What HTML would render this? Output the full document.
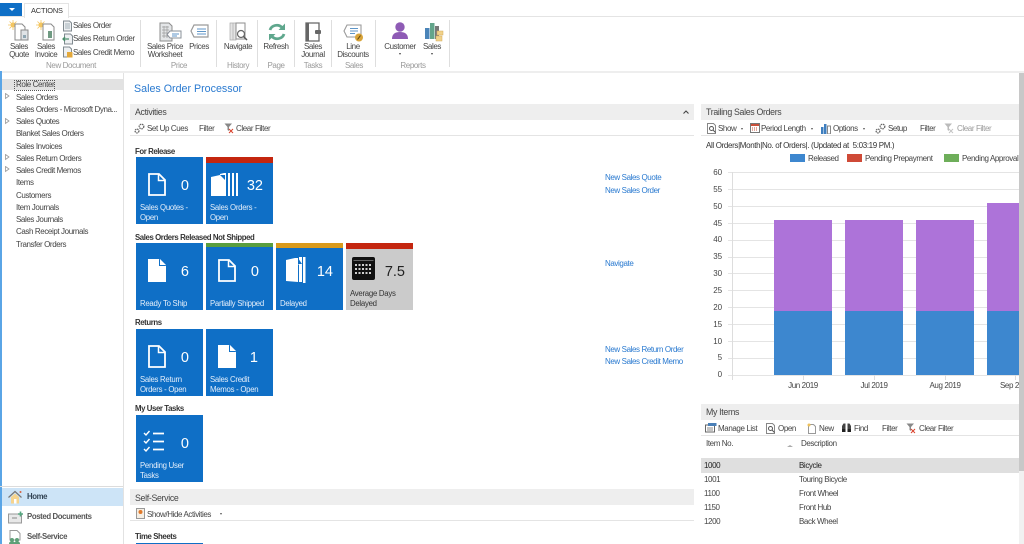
<!DOCTYPE html>
<html><head><meta charset="utf-8"><style>
html,body{margin:0;padding:0;width:1024px;height:544px;overflow:hidden;background:#fff}
body{position:relative;font-family:"Liberation Sans",sans-serif;font-size:8px;letter-spacing:-.4px;color:#444}
.a,.t,svg{position:absolute}
.t{white-space:nowrap;line-height:10px}
.c{text-align:center;transform:translateX(-50%)}
.g{color:#9a9a9a}
.b{font-weight:bold;color:#333;font-size:7.8px}
.l{color:#2a7ad0}
.h{font-size:8.8px;letter-spacing:-.33px;color:#444}
.nv{font-weight:bold;font-size:7.8px;letter-spacing:-.38px}
.hd{position:absolute;background:#eeeeee;height:16px}
.tile{position:absolute;width:67px;height:67px;background:#0f6fc6;color:#fff}
.tile .n{position:absolute;top:21px;right:14px;font-size:14.5px;letter-spacing:0;line-height:16px;color:#fff;text-align:right}
.tile .x{position:absolute;left:4px;bottom:2px;font-size:7.8px;letter-spacing:-.27px;line-height:9.4px;color:#e4eefa;white-space:nowrap}
.bar{position:absolute;left:0;top:0;width:100%;height:6px}
.sep{position:absolute;top:20px;height:47px;width:1px;background:#dedede}
.hl{position:absolute;left:728px;width:291px;height:1px;background:#e4e4e4}
.r{text-align:right;letter-spacing:-.1px;font-size:8px}
.k{position:absolute;top:375px;width:1px;height:5px;background:#dddddd}
</style></head><body>

<!-- top tab bar -->
<div class="a" style="left:0;top:3px;width:22px;height:13px;background:#0f6fc6"></div>
<div class="a" style="left:9px;top:8px;border-left:3px solid transparent;border-right:3px solid transparent;border-top:3px solid #fff"></div>
<div class="a" style="left:24px;top:3px;width:43px;height:14px;border:1px solid #e4e4e4;border-bottom:0;background:#fff"></div>
<div class="t" style="left:31px;top:6px;font-size:7.4px;letter-spacing:-.15px;color:#333">ACTIONS</div>
<div class="a" style="left:0;top:16px;width:24px;height:1px;background:#e4e4e4"></div>
<div class="a" style="left:68px;top:16px;width:956px;height:1px;background:#e4e4e4"></div>

<!-- ribbon icons -->
<svg style="left:8px;top:20px" width="22" height="22" viewBox="0 0 22 22"><circle cx="5" cy="5" r="2.5" fill="#f3c560"/><path d="M5 0v10M0 5h10M1.500 1.500l7 7M8.500 1.500l-7 7" stroke="#f3c560" stroke-width=".8"/><path d="M7 4h7l3 3v13H7z" fill="#fff" stroke="#8a8a8a"/><path d="M13 10h7v10h-7z" fill="#dfe3e6" stroke="#8a8a8a"/><path d="M15 15h3v3h-3z" fill="#8fa6b2"/></svg>
<svg style="left:36px;top:20px" width="22" height="22" viewBox="0 0 22 22"><circle cx="5" cy="5" r="2.500" fill="#f3c560"/><path d="M5 0v10M0 5h10M1.500 1.500l7 7M8.500 1.500l-7 7" stroke="#f3c560" stroke-width=".8"/><path d="M7 4h8l3 3v13H7z" fill="#fff" stroke="#8a8a8a"/><path d="M12 11h4v7h-4z" fill="#6f9a82"/></svg>
<svg style="left:62px;top:20px" width="11" height="12" viewBox="0 0 11 12"><path d="M1.500 1h6l2 2v8h-8z" fill="#eef0f2" stroke="#808a90"/><path d="M3 4h5M3 6h5M3 8h5" stroke="#8a9aa5" stroke-width=".8"/></svg>
<svg style="left:62px;top:33px" width="11" height="12" viewBox="0 0 11 12"><path d="M2.500 1h6l2 2v8h-8z" fill="#eef0f2" stroke="#808a90"/><path d="M7 6H1M3 4L1 6l2 2" stroke="#4c8f6c" stroke-width="1.300" fill="none"/></svg>
<svg style="left:62px;top:46px" width="11" height="12" viewBox="0 0 11 12"><path d="M1.500 1h6l2 2v8h-8z" fill="#eef0f2" stroke="#808a90"/><rect x="5" y="6" width="5.500" height="5.500" fill="#e3a93c"/></svg>
<svg style="left:159px;top:22px" width="24" height="21" viewBox="0 0 24 21"><path d="M1 1h9l3 3v15H1z" fill="#e4e6e8" stroke="#8d8d8d"/><path d="M3 5h7M3 8h7M3 11h7M3 14h7M5 4v12M8 4v12" stroke="#9a9a9a" stroke-width=".7"/><path d="M11 9h11v7H11l-3-3.500z" fill="#fff" stroke="#8a9098"/><path d="M13 12h7M13 14h5" stroke="#5f96c8"/></svg>
<svg style="left:190px;top:23px" width="20" height="16" viewBox="0 0 20 16"><path d="M4 2h14v12H4L1 8z" fill="#fff" stroke="#9a9a9a" stroke-width="1.200"/><path d="M7 6h9M7 8.500h9M7 11h9" stroke="#5f96c8"/></svg>
<svg style="left:229px;top:22px" width="20" height="21" viewBox="0 0 20 21"><path d="M1 1h3v17H1zM4 1h3v17H4z" fill="#e4e4e4" stroke="#aaa" stroke-width=".7"/><path d="M7 1h9v16H7z" fill="#fff" stroke="#8d8d8d"/><circle cx="12" cy="12" r="3.500" fill="#fff" stroke="#666" stroke-width="1.200"/><path d="M14.500 14.500L18 18" stroke="#555" stroke-width="1.500"/></svg>
<svg style="left:267px;top:22px" width="20" height="20" viewBox="0 0 20 20"><path d="M3 8a7 6.500 0 0 1 12-2.500" fill="none" stroke="#5fa78d" stroke-width="2.800"/><path d="M18 1.500v6.500h-6.500z" fill="#5fa78d"/><path d="M17 12a7 6.500 0 0 1-12 2.500" fill="none" stroke="#5fa78d" stroke-width="2.800"/><path d="M2 18.500V12h6.500z" fill="#5fa78d"/></svg>
<svg style="left:305px;top:22px" width="16" height="20" viewBox="0 0 16 20"><path d="M1 1h13v18H1z" fill="#fff" stroke="#666" stroke-width="1.300"/><rect x="1" y="1" width="3" height="18" fill="#666"/><rect x="10" y="8" width="6" height="4" rx="1" fill="#666"/></svg>
<svg style="left:343px;top:24px" width="22" height="20" viewBox="0 0 22 20"><path d="M4 1h14v12H4L1 7z" fill="#fff" stroke="#9a9a9a" stroke-width="1.100"/><path d="M7 4.500h8M7 7h8M7 9.500h5" stroke="#5f96c8"/><circle cx="16" cy="13.500" r="4" fill="#d8a43a"/><path d="M14.500 15.500l3-4" stroke="#5a4210"/></svg>
<svg style="left:391px;top:21px" width="18" height="19" viewBox="0 0 18 19"><circle cx="9" cy="6" r="4.700" fill="#8e5bb5"/><path d="M1 18c0-5 3-7 8-7s8 2 8 7z" fill="#8e5bb5"/></svg>
<svg style="left:424px;top:21px" width="20" height="21" viewBox="0 0 20 21"><rect x="1" y="7" width="4.500" height="11" fill="#4a84b8"/><rect x="6" y="2" width="4.500" height="16" fill="#63a58b"/><rect x="11" y="5" width="4" height="13" fill="#777"/><rect x="13" y="10" width="6" height="4" fill="#f1d28a" stroke="#d2a95a" stroke-width=".5"/><rect x="12" y="15" width="6" height="5" fill="#f1d28a" stroke="#d2a95a" stroke-width=".5"/></svg>

<!-- ribbon labels -->
<div class="t c" style="left:19px;top:42px">Sales</div><div class="t c" style="left:19px;top:50px">Quote</div>
<div class="t c" style="left:46px;top:42px">Sales</div><div class="t c" style="left:46px;top:50px">Invoice</div>
<div class="t" style="left:73px;top:21px">Sales Order</div>
<div class="t" style="left:73px;top:34px">Sales Return Order</div>
<div class="t" style="left:73px;top:48px">Sales Credit Memo</div>
<div class="t c g" style="left:71px;top:61px">New Document</div>
<div class="t c" style="left:165px;top:42px">Sales Price</div><div class="t c" style="left:165px;top:50px">Worksheet</div>
<div class="t c" style="left:199px;top:42px">Prices</div>
<div class="t c g" style="left:179px;top:61px">Price</div>
<div class="t c" style="left:238px;top:42px">Navigate</div>
<div class="t c g" style="left:238px;top:61px">History</div>
<div class="t c" style="left:276px;top:42px">Refresh</div>
<div class="t c g" style="left:276px;top:61px">Page</div>
<div class="t c" style="left:313px;top:42px">Sales</div><div class="t c" style="left:313px;top:50px">Journal</div>
<div class="t c g" style="left:313px;top:61px">Tasks</div>
<div class="t c" style="left:353px;top:42px">Line</div><div class="t c" style="left:353px;top:50px">Discounts</div>
<div class="t c g" style="left:354px;top:61px">Sales</div>
<div class="t c" style="left:400px;top:42px">Customer</div>
<div class="t c" style="left:432px;top:42px">Sales</div>
<div class="a" style="left:399px;top:53px;border-left:1.500px solid transparent;border-right:1.500px solid transparent;border-top:2px solid #444"></div>
<div class="a" style="left:431px;top:53px;border-left:1.500px solid transparent;border-right:1.500px solid transparent;border-top:2px solid #444"></div>
<div class="t c g" style="left:413px;top:61px">Reports</div>
<div class="sep" style="left:140px"></div><div class="sep" style="left:216px"></div><div class="sep" style="left:257px"></div><div class="sep" style="left:294px"></div><div class="sep" style="left:331px"></div><div class="sep" style="left:375px"></div><div class="sep" style="left:449px"></div>
<div class="a" style="left:0;top:71px;width:1024px;height:2px;background:#eeeeee"></div>

<!-- nav pane -->
<div class="a" style="left:0;top:71px;width:1.500px;height:473px;background:#5aa5e6"></div>
<div class="a" style="left:123px;top:73px;width:1px;height:471px;background:#e2e2e2"></div>
<div class="a" style="left:2px;top:79px;width:121px;height:11px;background:#e2e2e2"></div>
<div class="a" style="left:14px;top:79.500px;width:39px;height:9px;border:1px dotted #555"></div>
<div class="t" style="left:16px;top:80px">Role Center</div>
<div class="t" style="left:16px;top:93px">Sales Orders</div>
<div class="t" style="left:16px;top:105px">Sales Orders - Microsoft Dyna...</div>
<div class="t" style="left:16px;top:117px">Sales Quotes</div>
<div class="t" style="left:16px;top:129px">Blanket Sales Orders</div>
<div class="t" style="left:16px;top:142px">Sales Invoices</div>
<div class="t" style="left:16px;top:154px">Sales Return Orders</div>
<div class="t" style="left:16px;top:166px">Sales Credit Memos</div>
<div class="t" style="left:16px;top:178px">Items</div>
<div class="t" style="left:16px;top:191px">Customers</div>
<div class="t" style="left:16px;top:203px">Item Journals</div>
<div class="t" style="left:16px;top:215px">Sales Journals</div>
<div class="t" style="left:16px;top:227px">Cash Receipt Journals</div>
<div class="t" style="left:16px;top:240px">Transfer Orders</div>
<svg style="left:5px;top:93px" width="5" height="7"><path d="M.5.500l3.500 2.500-3.500 2.500z" fill="none" stroke="#999" stroke-width=".8"/></svg>
<svg style="left:5px;top:118px" width="5" height="7"><path d="M.5.500l3.500 2.500-3.500 2.500z" fill="none" stroke="#999" stroke-width=".8"/></svg>
<svg style="left:5px;top:154px" width="5" height="7"><path d="M.5.500l3.500 2.500-3.500 2.500z" fill="none" stroke="#999" stroke-width=".8"/></svg>
<svg style="left:5px;top:166px" width="5" height="7"><path d="M.5.500l3.500 2.500-3.500 2.500z" fill="none" stroke="#999" stroke-width=".8"/></svg>

<div class="a" style="left:0;top:486px;width:123px;height:1px;background:#dcdcdc"></div>
<div class="a" style="left:2px;top:488px;width:121px;height:18px;background:#cde4f7"></div>
<svg style="left:8px;top:490px" width="15" height="14" viewBox="0 0 15 14"><path d="M.5 7.500L7 1.500l6.500 6" fill="none" stroke="#777" stroke-width="1.200"/><path d="M3 7l4-3.500L11 7v6.500H3z" fill="#f6d48e"/><rect x="6" y="9" width="2.500" height="4.500" fill="#fff"/><circle cx="12.500" cy="2" r="1" fill="#d9603c"/></svg>
<svg style="left:8px;top:511px" width="16" height="13" viewBox="0 0 16 13"><rect x=".5" y="3" width="13" height="9" fill="#e8e8e8" stroke="#999"/><path d="M4 7h5" stroke="#888"/><path d="M10 3h5M12.500 .5v5" stroke="#55a57f" stroke-width="1.600"/></svg>
<svg style="left:8px;top:530px" width="15" height="14" viewBox="0 0 15 14"><path d="M2 .5h7l3 3V10H2z" fill="#fff" stroke="#999"/><circle cx="4" cy="10" r="2" fill="#5fa078"/><circle cx="9" cy="10" r="2" fill="#5fa078"/><path d="M1 14c0-2 1-2.500 3-2.500S7 12 7 14zM6 14c0-2 1-2.500 3-2.500s3 .5 3 2.500z" fill="#5fa078"/></svg>
<div class="t nv" style="left:27px;top:492px;color:#345">Home</div>
<div class="t nv" style="left:27px;top:512px;color:#555">Posted Documents</div>
<div class="t nv" style="left:27px;top:532px;color:#555">Self-Service</div>

<!-- main -->
<div class="t" style="left:134px;top:82px;font-size:10.7px;letter-spacing:0;line-height:14px;color:#2a7ad0">Sales Order Processor</div>
<div class="hd" style="left:130px;top:104px;width:564px"></div>
<div class="t h" style="left:135px;top:107px">Activities</div>
<svg style="left:683px;top:110px" width="6" height="4"><path d="M.5 3.500L3 1l2.500 2.500" fill="none" stroke="#444" stroke-width="1.100"/></svg>
<svg style="left:134px;top:123px" width="11" height="11" viewBox="0 0 11 11"><circle cx="7.500" cy="3.500" r="2.300" fill="none" stroke="#666" stroke-width="1.300" stroke-dasharray="1.500 .7"/><circle cx="3" cy="8" r="1.900" fill="none" stroke="#666" stroke-width="1.300" stroke-dasharray="1.500 .7"/></svg>
<div class="t" style="left:147px;top:124px">Set Up Cues</div>
<div class="t" style="left:199px;top:124px">Filter</div>
<svg style="left:224px;top:123px" width="11" height="11" viewBox="0 0 11 11"><path d="M.5.500h7.500L5 4v4L3.500 7V4z" fill="#888"/><path d="M5 6l4 4M9 6l-4 4" stroke="#d9412b" stroke-width="1"/></svg>
<div class="t" style="left:236px;top:124px">Clear Filter</div>
<div class="a" style="left:130px;top:135px;width:564px;height:1px;background:#e4e4e4"></div>

<div class="t b" style="left:135px;top:147px">For Release</div>
<div class="tile" style="left:136px;top:157px">
 <svg style="left:12px;top:16px" width="18" height="23" viewBox="0 0 18 23"><path d="M1 1h10l6 6v15H1z" fill="none" stroke="#fff" stroke-width="1.800"/><path d="M10.500 1v6.500H17" fill="none" stroke="#fff" stroke-width="1.500"/></svg>
 <div class="n">0</div><div class="x">Sales Quotes -<br>Open</div></div>
<div class="tile" style="left:206px;top:157px"><div class="bar" style="background:#c4260f"></div>
 <svg style="left:4px;top:15px" width="28" height="25" viewBox="0 0 28 25"><path d="M1 5l9-2v-1l4-1 2 0v23H1z" fill="#fff"/><path d="M10 3l5 5V3z" fill="#0f6fc6"/><path d="M18 1h2v23h-2zM22 1h2v23h-2zM26 1h2v23h-2z" fill="#fff"/></svg>
 <div class="n" style="right:10px">32</div><div class="x">Sales Orders -<br>Open</div></div>

<div class="t b" style="left:135px;top:233px">Sales Orders Released Not Shipped</div>
<div class="tile" style="left:136px;top:243px">
 <svg style="left:12px;top:16px" width="18" height="23" viewBox="0 0 18 23"><path d="M0 0h11l7 7v16H0z" fill="#fff"/><path d="M11 0v7h7z" fill="#0f6fc6"/><path d="M12 0l6 6h-6z" fill="#fff"/></svg>
 <div class="n">6</div><div class="x">Ready To Ship</div></div>
<div class="tile" style="left:206px;top:243px"><div class="bar" style="height:4px;background:#5a9e3e"></div>
 <svg style="left:12px;top:16px" width="18" height="23" viewBox="0 0 18 23"><path d="M1 1h10l6 6v15H1z" fill="none" stroke="#fff" stroke-width="1.800"/><path d="M10.500 1v6.500H17" fill="none" stroke="#fff" stroke-width="1.500"/></svg>
 <div class="n">0</div><div class="x">Partially Shipped</div></div>
<div class="tile" style="left:276px;top:243px"><div class="bar" style="height:5px;background:#d99a1c"></div>
 <svg style="left:10px;top:14px" width="20" height="26" viewBox="0 0 20 26"><path d="M0 3l9-2 3 0v24l-12-1z" fill="#fff"/><path d="M10 1l5 6-5 1z" fill="#fff"/><path d="M17 0h2.500v26H17z" fill="#fff"/><path d="M13 0h3v25h-3z" fill="#fff"/><path d="M12 1l4 6h-4z" fill="#0f6fc6"/></svg>
 <div class="n" style="right:10px">14</div><div class="x">Delayed</div></div>
<div class="tile" style="left:346px;top:243px;background:#cbcbcb;color:#333"><div class="bar" style="background:#c4260f"></div>
 <svg style="left:6px;top:14px" width="23" height="23" viewBox="0 0 23 23"><rect x="0" y="0" width="23" height="23" rx="2" fill="#111"/><rect x="1.500" y="3" width="20" height="1" fill="#666"/><g fill="#cfcfcf"><rect x="3" y="7" width="2" height="2"/><rect x="6.500" y="7" width="2" height="2"/><rect x="10" y="7" width="2" height="2"/><rect x="13.500" y="7" width="2" height="2"/><rect x="17" y="7" width="2" height="2"/><rect x="3" y="11" width="2" height="2"/><rect x="6.500" y="11" width="2" height="2"/><rect x="10" y="11" width="2" height="2"/><rect x="13.500" y="11" width="2" height="2"/><rect x="17" y="11" width="2" height="2"/><rect x="3" y="15" width="2" height="2"/><rect x="6.500" y="15" width="2" height="2"/><rect x="10" y="15" width="2" height="2"/><rect x="13.500" y="15" width="2" height="2"/><rect x="17" y="15" width="2" height="2"/></g></svg>
 <div class="n" style="right:8px;color:#222">7.5</div><div class="x" style="color:#333">Average Days<br>Delayed</div></div>

<div class="t b" style="left:135px;top:318px">Returns</div>
<div class="tile" style="left:136px;top:329px">
 <svg style="left:12px;top:16px" width="18" height="23" viewBox="0 0 18 23"><path d="M1 1h10l6 6v15H1z" fill="none" stroke="#fff" stroke-width="1.800"/><path d="M10.500 1v6.500H17" fill="none" stroke="#fff" stroke-width="1.500"/></svg>
 <div class="n">0</div><div class="x">Sales Return<br>Orders - Open</div></div>
<div class="tile" style="left:206px;top:329px">
 <svg style="left:12px;top:16px" width="18" height="23" viewBox="0 0 18 23"><path d="M0 0h11l7 7v16H0z" fill="#fff"/><path d="M11 0v7h7z" fill="#0f6fc6"/><path d="M12 0l6 6h-6z" fill="#fff"/></svg>
 <div class="n" style="right:15px">1</div><div class="x">Sales Credit<br>Memos - Open</div></div>

<div class="t b" style="left:135px;top:404px">My User Tasks</div>
<div class="tile" style="left:136px;top:415px">
 <svg style="left:7px;top:15px" width="22" height="22" viewBox="0 0 22 22"><path d="M1 3l2 2 3.500-4M1 11l2 2 3.500-4M1 19l2 2 3.500-4" fill="none" stroke="#fff" stroke-width="1.400"/><path d="M10 3.500h11M10 11.500h11M10 19.500h11" stroke="#fff" stroke-width="1.800"/></svg>
 <div class="n">0</div><div class="x">Pending User<br>Tasks</div></div>

<div class="t l" style="left:605px;top:173px">New Sales Quote</div>
<div class="t l" style="left:605px;top:186px">New Sales Order</div>
<div class="t l" style="left:605px;top:259px">Navigate</div>
<div class="t l" style="left:605px;top:345px">New Sales Return Order</div>
<div class="t l" style="left:605px;top:357px">New Sales Credit Memo</div>

<div class="hd" style="left:130px;top:489px;width:564px"></div>
<div class="t h" style="left:135px;top:493px">Self-Service</div>
<svg style="left:136px;top:508px" width="10" height="11" viewBox="0 0 10 11"><rect x=".5" y=".5" width="8" height="10" fill="#f6efe4" stroke="#999"/><circle cx="4.500" cy="4" r="2" fill="#e0792b"/></svg>
<div class="t" style="left:147px;top:510px">Show/Hide Activities</div>
<div class="a" style="left:220px;top:513px;border-left:1.500px solid transparent;border-right:1.500px solid transparent;border-top:2px solid #555"></div>
<div class="a" style="left:130px;top:520px;width:564px;height:1px;background:#e4e4e4"></div>
<div class="t b" style="left:135px;top:532px">Time Sheets</div>
<div class="a" style="left:136px;top:543px;width:67px;height:1px;background:#0f6fc6"></div>

<!-- right column: chart -->
<div class="hd" style="left:701px;top:104px;width:318px"></div>
<div class="t h" style="left:706px;top:107px">Trailing Sales Orders</div>
<svg style="left:707px;top:123px" width="10" height="11" viewBox="0 0 10 11"><path d="M.5.500h6l2 2v8h-8z" fill="#fff" stroke="#888"/><circle cx="4.500" cy="5.500" r="2" fill="none" stroke="#555"/><path d="M6 7l2.500 2.500" stroke="#555"/></svg>
<div class="t" style="left:718px;top:124px">Show</div>
<div class="a" style="left:741px;top:127.500px;border-left:1.500px solid transparent;border-right:1.500px solid transparent;border-top:2px solid #555"></div>
<svg style="left:750px;top:123px" width="10" height="10" viewBox="0 0 10 10"><rect x=".5" y=".5" width="9" height="9" fill="#fff" stroke="#777"/><rect x="1" y="1" width="8" height="2" fill="#c9503a"/><path d="M2 5h6M2 7h6" stroke="#c9503a" stroke-dasharray="1 1"/></svg>
<div class="t" style="left:761px;top:124px">Period Length</div>
<div class="a" style="left:811px;top:127.500px;border-left:1.500px solid transparent;border-right:1.500px solid transparent;border-top:2px solid #555"></div>
<svg style="left:821px;top:123px" width="10" height="11" viewBox="0 0 10 11"><rect x="0" y="4" width="2.500" height="7" fill="#3f7fbf"/><rect x="3" y="1" width="2.500" height="10" fill="#3f7fbf"/><path d="M6.500 3h3v8h-3z" fill="#fff" stroke="#888"/></svg>
<div class="t" style="left:833px;top:124px">Options</div>
<div class="a" style="left:863px;top:127.500px;border-left:1.500px solid transparent;border-right:1.500px solid transparent;border-top:2px solid #555"></div>
<svg style="left:875px;top:123px" width="11" height="11" viewBox="0 0 11 11"><circle cx="7.500" cy="3.500" r="2.300" fill="none" stroke="#666" stroke-width="1.300" stroke-dasharray="1.500 .7"/><circle cx="3" cy="8" r="1.900" fill="none" stroke="#666" stroke-width="1.300" stroke-dasharray="1.500 .7"/></svg>
<div class="t" style="left:888px;top:124px">Setup</div>
<div class="t" style="left:920px;top:124px">Filter</div>
<svg style="left:944px;top:123px" width="11" height="11" viewBox="0 0 11 11"><path d="M.5.500h7.500L5 4v4L3.500 7V4z" fill="#bbb"/><path d="M5 6l4 4M9 6l-4 4" stroke="#c4c4c4"/></svg>
<div class="t g" style="left:957px;top:124px">Clear Filter</div>
<div class="a" style="left:701px;top:135px;width:318px;height:1px;background:#e4e4e4"></div>
<div class="t" style="left:706px;top:141px;letter-spacing:-.35px;color:#333">All Orders|Month|No. of Orders|. (Updated at&nbsp; 5:03:19 PM.)</div>

<div class="a" style="left:790px;top:154px;width:15px;height:8px;background:#3d87cf"></div>
<div class="t" style="left:808px;top:154px">Released</div>
<div class="a" style="left:847px;top:154px;width:15px;height:8px;background:#cf4a37"></div>
<div class="t" style="left:865px;top:154px">Pending Prepayment</div>
<div class="a" style="left:944px;top:154px;width:15px;height:8px;background:#6eae5a"></div>
<div class="t" style="left:962px;top:154px;width:57px;overflow:hidden">Pending Approval</div>

<!-- gridlines -->
<div class="hl" style="top:172px"></div><div class="hl" style="top:189px"></div><div class="hl" style="top:206px"></div><div class="hl" style="top:223px"></div><div class="hl" style="top:240px"></div><div class="hl" style="top:257px"></div><div class="hl" style="top:273px"></div><div class="hl" style="top:290px"></div><div class="hl" style="top:307px"></div><div class="hl" style="top:324px"></div><div class="hl" style="top:341px"></div><div class="hl" style="top:358px"></div><div class="hl" style="top:375px"></div>
<div class="a" style="left:732px;top:172px;width:1px;height:208px;background:#dddddd"></div>
<div class="k" style="left:803px"></div><div class="k" style="left:874px"></div><div class="k" style="left:945px"></div><div class="k" style="left:1015px"></div>

<div class="t r" style="left:704px;width:18px;top:168px">60</div><div class="t r" style="left:704px;width:18px;top:185px">55</div><div class="t r" style="left:704px;width:18px;top:202px">50</div><div class="t r" style="left:704px;width:18px;top:219px">45</div><div class="t r" style="left:704px;width:18px;top:235px">40</div><div class="t r" style="left:704px;width:18px;top:252px">35</div><div class="t r" style="left:704px;width:18px;top:269px">30</div><div class="t r" style="left:704px;width:18px;top:286px">25</div><div class="t r" style="left:704px;width:18px;top:303px">20</div><div class="t r" style="left:704px;width:18px;top:320px">15</div><div class="t r" style="left:704px;width:18px;top:337px">10</div><div class="t r" style="left:704px;width:18px;top:353px">5</div><div class="t r" style="left:704px;width:18px;top:370px">0</div>

<!-- bars -->
<div class="a" style="left:774px;top:220px;width:58px;height:91px;background:#ad73d9"></div><div class="a" style="left:774px;top:311px;width:58px;height:64px;background:#3d87cf"></div>
<div class="a" style="left:845px;top:220px;width:58px;height:91px;background:#ad73d9"></div><div class="a" style="left:845px;top:311px;width:58px;height:64px;background:#3d87cf"></div>
<div class="a" style="left:916px;top:220px;width:58px;height:91px;background:#ad73d9"></div><div class="a" style="left:916px;top:311px;width:58px;height:64px;background:#3d87cf"></div>
<div class="a" style="left:987px;top:203px;width:32px;height:108px;background:#ad73d9"></div><div class="a" style="left:987px;top:311px;width:32px;height:64px;background:#3d87cf"></div>

<div class="t c" style="left:803px;top:381px">Jun 2019</div>
<div class="t c" style="left:874px;top:381px">Jul 2019</div>
<div class="t c" style="left:945px;top:381px">Aug 2019</div>
<div class="t" style="left:1000px;top:381px;width:19px;overflow:hidden">Sep 2019</div>

<!-- my items -->
<div class="hd" style="left:701px;top:404px;width:318px"></div>
<div class="t h" style="left:706px;top:407px">My Items</div>
<svg style="left:705px;top:422px" width="12" height="11" viewBox="0 0 12 11"><rect x=".5" y="3" width="9" height="7" fill="#fff" stroke="#666"/><rect x="3" y="1" width="8.500" height="3" fill="#4a80b8"/><path d="M2 6h6M2 8h6" stroke="#888"/></svg>
<div class="t" style="left:718px;top:424px">Manage List</div>
<svg style="left:766px;top:423px" width="10" height="11" viewBox="0 0 10 11"><path d="M.5.500h6l2 2v8h-8z" fill="#fff" stroke="#888"/><circle cx="4.500" cy="5.500" r="2" fill="none" stroke="#555"/><path d="M6 7l2.500 2.500" stroke="#555"/></svg>
<div class="t" style="left:778px;top:424px">Open</div>
<svg style="left:807px;top:423px" width="10" height="11" viewBox="0 0 10 11"><path d="M1.500 1.500h5l2 2v7h-7z" fill="#fff" stroke="#999"/><circle cx="2" cy="2" r="1.500" fill="#efc15a"/></svg>
<div class="t" style="left:819px;top:424px">New</div>
<svg style="left:841px;top:423px" width="11" height="10" viewBox="0 0 11 10"><path d="M1 9V3l1.500-2.500h2V9zM6.500 9V.5h2L10 3v6z" fill="#444"/><rect x="1" y="6" width="3.500" height="3" fill="#222"/><rect x="6.500" y="6" width="3.500" height="3" fill="#222"/></svg>
<div class="t" style="left:854px;top:424px">Find</div>
<div class="t" style="left:882px;top:424px">Filter</div>
<svg style="left:906px;top:423px" width="11" height="11" viewBox="0 0 11 11"><path d="M.5.500h7.500L5 4v4L3.500 7V4z" fill="#888"/><path d="M5 6l4 4M9 6l-4 4" stroke="#d9412b"/></svg>
<div class="t" style="left:919px;top:424px">Clear Filter</div>
<div class="a" style="left:701px;top:435px;width:318px;height:1px;background:#e4e4e4"></div>
<div class="t" style="left:706px;top:439px">Item No.</div>
<div class="t" style="left:801px;top:439px">Description</div>
<div class="a" style="left:787px;top:445px;border-left:3px solid transparent;border-right:3px solid transparent;border-bottom:2px solid #aaa"></div>
<div class="a" style="left:701px;top:458px;width:318px;height:15px;background:#dfdfdf"></div>
<div class="t" style="left:704px;top:461px;color:#222">1000</div><div class="t" style="left:799px;top:461px;color:#222">Bicycle</div>
<div class="t" style="left:704px;top:475px">1001</div><div class="t" style="left:799px;top:475px">Touring Bicycle</div>
<div class="t" style="left:704px;top:489px">1100</div><div class="t" style="left:799px;top:489px">Front Wheel</div>
<div class="t" style="left:704px;top:503px">1150</div><div class="t" style="left:799px;top:503px">Front Hub</div>
<div class="t" style="left:704px;top:517px">1200</div><div class="t" style="left:799px;top:517px">Back Wheel</div>

<!-- scrollbar -->
<div class="a" style="left:1019px;top:73px;width:5px;height:398px;background:#c8c8c8"></div>
<div class="a" style="left:1019px;top:471px;width:5px;height:73px;background:#f1f1f1"></div>
</body></html>
